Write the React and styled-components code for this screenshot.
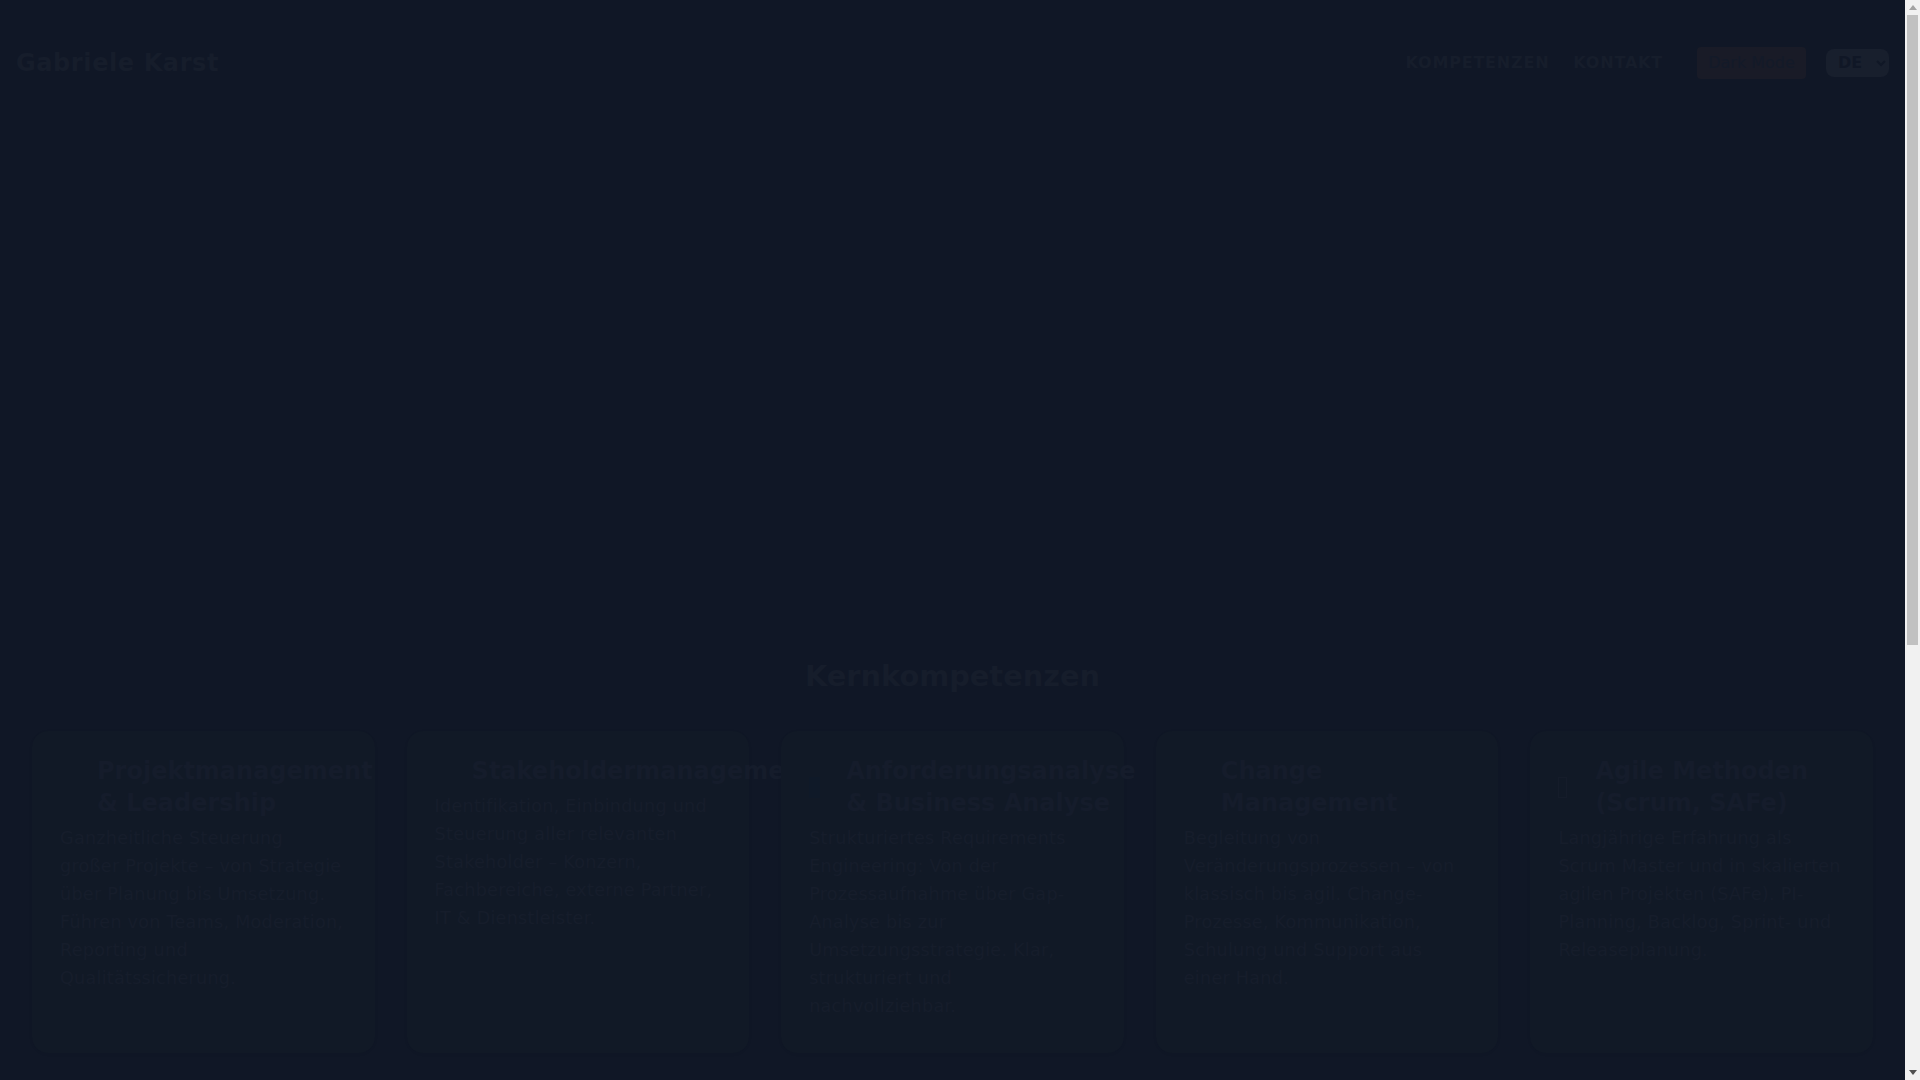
import styled, { createGlobalStyle } from 'styled-components';

const GlobalStyle = createGlobalStyle`
  html, body {
    margin: 0;
    padding: 0;
    background: #101726;
    font-family: "DejaVu Sans", sans-serif;
  }
  * {
    box-sizing: border-box;
  }
`;

const Page = styled.div`
  min-height: 1800px;
  padding-right: 15px;
  background: #101726;
`;

const ScrollTrack = styled.div`
  position: fixed;
  top: 0;
  right: 0;
  display: flex;
  flex-direction: column;
  align-items: center;
  justify-content: space-between;
  width: 15px;
  height: 100vh;
  background: #f1f1f1;
`;

const ScrollArrow = styled.span`
  width: 0;
  height: 0;
  margin: 5px 0;
  border-left: 4px solid transparent;
  border-right: 4px solid transparent;
  border-${(props) => (props.$up ? 'bottom' : 'top')}: 5px solid ${(props) => (props.$up ? '#a3a3a3' : '#505050')};
`;

const ScrollThumb = styled.div`
  position: absolute;
  top: 15px;
  left: 2px;
  right: 2px;
  height: 630px;
  background: #c1c1c1;
`;

const Header = styled.header`
  display: flex;
  align-items: center;
  justify-content: space-between;
  height: 125px;
  padding: 0 16px;
`;

const Logo = styled.div`
  font-size: 24px;
  font-weight: 700;
  letter-spacing: 0.6px;
  color: #161d2b;
`;

const Nav = styled.nav`
  display: flex;
  align-items: center;
`;

const NavLink = styled.a`
  margin-left: 24px;
  font-size: 16px;
  font-weight: 700;
  letter-spacing: 0.8px;
  color: #161d2b;
`;

const ModeButton = styled.button`
  margin-left: 34px;
  width: 109px;
  height: 32px;
  padding: 0;
  border: 0;
  border-radius: 4px;
  background: #191b27;
  color: #131a29;
  font-family: inherit;
  font-size: 16px;
`;

const LangSelect = styled.select`
  margin-left: 20px;
  width: 63px;
  height: 28px;
  padding: 0 8px;
  border: 0;
  border-radius: 8px;
  background: #181f2d;
  color: #101726;
  font-family: inherit;
  font-size: 16px;
  font-weight: 700;
`;

const Hero = styled.div`
  height: 530px;
`;

const Section = styled.section`
  padding: 0 32px;
`;

const Heading = styled.h2`
  margin: 0 0 33px;
  font-size: 28.8px;
  font-weight: 700;
  line-height: 1.5;
  text-align: center;
  color: #161d2b;
`;

const CardGrid = styled.div`
  display: grid;
  grid-template-columns: repeat(5, minmax(0, 1fr));
  gap: 32px;
`;

const Card = styled.article`
  position: relative;
  height: 322px;
  padding: 24px 28px;
  border-radius: 16px;
  background: #111926;
  box-shadow: 0 1px 6px rgba(0, 0, 0, 0.02);
`;

const CardHead = styled.div`
  display: flex;
  align-items: center;
  gap: 12px;
  margin-bottom: 5px;
`;

const CardIcon = styled.span`
  flex: none;
  width: 25px;
  height: 21px;
`;

const MissingGlyph = styled.span`
  display: block;
  width: ${(props) => (props.$filled ? '11px' : '9px')};
  height: 21px;
  background: ${(props) => (props.$filled ? '#0f1928' : 'transparent')};
  border: ${(props) => (props.$filled ? 'none' : '1px solid #151c2a')};
`;

const CardTitle = styled.h3`
  margin: 0;
  font-size: 24px;
  font-weight: 700;
  line-height: 32px;
  color: #151c2b;
`;

const CardText = styled.p`
  margin: 0;
  font-size: 17.6px;
  line-height: 28px;
  letter-spacing: 0.25px;
  color: #161d2b;
`;

const cards = [
  { title: 'Projektmanagement & Leadership', text: 'Ganzheitliche Steuerung großer Projekte – von Strategie über Planung bis Umsetzung. Führen von Teams, Moderation, Reporting und Qualitätssicherung.' },
  { title: 'Stakeholdermanagement', text: 'Identifikation, Einbindung und Steuerung aller relevanten Stakeholder – Konzern, Fachbereiche, externe Partner, IT & Dienstleister.' },
  { glyph: 'filled', title: 'Anforderungsanalyse & Business Analyse', text: 'Strukturiertes Requirements Engineering: Von der Prozessaufnahme über Gap-Analyse bis zur Umsetzungsstrategie. Klar, strukturiert und nachvollziehbar.' },
  { title: 'Change Management', text: 'Begleitung von Veränderungsprozessen – von klassisch bis agil. Change-Prozesse, Kommunikation, Schulung und Support aus einer Hand.' },
  { glyph: 'outline', title: 'Agile Methoden (Scrum, SAFe)', text: 'Langjährige Erfahrung als Scrum Master und in skalierten agilen Projekten (SAFe). PI-Planning, Backlog, Sprint- und Releaseplanung.' },
];

const App = () => {
  return (
    <Page>
      <GlobalStyle />
      <Header>
        <Logo>Gabriele Karst</Logo>
        <Nav>
          <NavLink>KOMPETENZEN</NavLink>
          <NavLink>KONTAKT</NavLink>
          <ModeButton>Dark Mode</ModeButton>
          <LangSelect defaultValue="DE">
            <option>DE</option>
            <option>EN</option>
          </LangSelect>
        </Nav>
      </Header>
      <Hero />
      <Section>
        <Heading>Kernkompetenzen</Heading>
        <CardGrid>
          {cards.map((card) => (
            <Card key={card.title}>
              <CardHead>
                <CardIcon>
                  {card.glyph && <MissingGlyph $filled={card.glyph === 'filled'} />}
                </CardIcon>
                <CardTitle>{card.title}</CardTitle>
              </CardHead>
              <CardText>{card.text}</CardText>
            </Card>
          ))}
        </CardGrid>
      </Section>
      <ScrollTrack>
        <ScrollArrow $up />
        <ScrollThumb />
        <ScrollArrow />
      </ScrollTrack>
    </Page>
  );
};

export default App;
